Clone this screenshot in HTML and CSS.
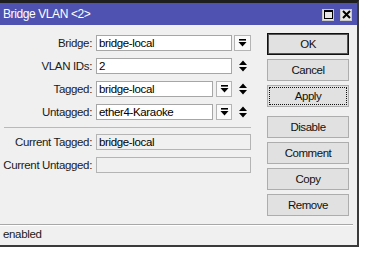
FILE: index.html
```html
<!DOCTYPE html>
<html>
<head>
<meta charset="utf-8">
<link rel="stylesheet" href="styles.css">
</head>
<body>
<div class="window">
  <div class="titlebar">
    <span class="title">Bridge VLAN &lt;2&gt;</span>
    <div class="tbtns">
      <span class="tbtn"><svg width="9" height="9" viewBox="0 0 9 9"><rect x="0.5" y="0.5" width="8" height="8" fill="none" stroke="#000" stroke-width="1"/><rect x="0" y="0" width="9" height="2" fill="#000"/></svg></span>
      <span class="tbtn"><svg width="9" height="9" viewBox="0 0 9 9"><path d="M1 1 L8 8 M8 1 L1 8" stroke="#000" stroke-width="2"/></svg></span>
    </div>
  </div>
  <div class="main">
    <div class="form">
      <div class="grid">
        <label class="lbl">Bridge:</label>
        <div class="cell">
          <div class="mainf"><div class="inp">bridge-local</div></div>
          <div class="side"><span class="dd dd-side"><svg width="9" height="8" viewBox="0 0 9 8"><rect x="1" y="0" width="7" height="1.6" fill="#000"/><path d="M0.5 3 H8.5 L4.5 7.5 Z" fill="#000"/></svg></span></div>
        </div>
        <label class="lbl">VLAN IDs:</label>
        <div class="cell">
          <div class="mainf"><div class="inp">2</div></div>
          <div class="side"><svg class="ud" width="8" height="12" viewBox="0 0 8 12"><path d="M0 5 H8 L4 0.5 Z M0 7 H8 L4 11.5 Z" fill="#000"/></svg></div>
        </div>
        <label class="lbl">Tagged:</label>
        <div class="cell">
          <div class="mainf"><div class="inp">bridge-local</div><span class="dd"><svg width="9" height="8" viewBox="0 0 9 8"><rect x="1" y="0" width="7" height="1.6" fill="#000"/><path d="M0.5 3 H8.5 L4.5 7.5 Z" fill="#000"/></svg></span></div>
          <div class="side"><svg class="ud" width="8" height="12" viewBox="0 0 8 12"><path d="M0 5 H8 L4 0.5 Z M0 7 H8 L4 11.5 Z" fill="#000"/></svg></div>
        </div>
        <label class="lbl">Untagged:</label>
        <div class="cell">
          <div class="mainf"><div class="inp">ether4-Karaoke</div><span class="dd"><svg width="9" height="8" viewBox="0 0 9 8"><rect x="1" y="0" width="7" height="1.6" fill="#000"/><path d="M0.5 3 H8.5 L4.5 7.5 Z" fill="#000"/></svg></span></div>
          <div class="side"><svg class="ud" width="8" height="12" viewBox="0 0 8 12"><path d="M0 5 H8 L4 0.5 Z M0 7 H8 L4 11.5 Z" fill="#000"/></svg></div>
        </div>
      </div>
      <div class="sep"></div>
      <div class="grid">
        <label class="lbl">Current Tagged:</label>
        <div class="cell"><div class="inp ro">bridge-local</div></div>
        <label class="lbl">Current Untagged:</label>
        <div class="cell"><div class="inp ro"></div></div>
      </div>
    </div>
    <div class="buttons">
      <div class="btn default">OK</div>
      <div class="btn">Cancel</div>
      <div class="btn focus">Apply</div>
      <div class="btn gap">Disable</div>
      <div class="btn">Comment</div>
      <div class="btn">Copy</div>
      <div class="btn">Remove</div>
    </div>
  </div>
  <div class="status"><span>enabled</span></div>
</div>
</body>
</html>
```

FILE: styles.css
```css
* { box-sizing: border-box; }
html, body { margin: 0; padding: 0; background: #ffffff; }
body {
  font-family: "Liberation Sans", Arial, sans-serif;
  font-size: 11.5px;
  letter-spacing: -0.35px;
  color: #1a1a1a;
}
.window {
  width: 359px;
  height: 247px;
  background: #f0f0f0;
  border-top: 3px solid #1e1e1e;
  border-right: 2px solid #3a3a3a;
  border-bottom: 2px solid #3a3a3a;
  display: flex;
  flex-direction: column;
}
.titlebar {
  height: 22px;
  background: #4f52b0;
  color: #fff;
  display: flex;
  align-items: center;
  justify-content: space-between;
  padding: 0 5px 0 3px;
}
.title { font-size: 12px; letter-spacing: -0.4px; padding-bottom: 1px; }
.tbtns { display: flex; gap: 6px; padding-top: 1px; }
.tbtn {
  width: 12px;
  height: 12px;
  background: #e6e6e6;
  border: 1px solid #c8c8c8;
  display: flex;
  align-items: center;
  justify-content: center;
}
.main {
  height: 199px;
  display: flex;
}
.form {
  width: 251px;
  padding-top: 10px;
}
.grid {
  display: grid;
  grid-template-columns: 92px 155px;
  column-gap: 4px;
  row-gap: 7px;
}
.lbl {
  text-align: right;
  line-height: 16px;
  white-space: nowrap;
}
.cell { display: flex; height: 16px; }
.mainf { width: 136px; display: flex; }
.side { width: 19px; display: flex; align-items: center; justify-content: center; }
.inp {
  flex: 1;
  height: 16px;
  background: #fff;
  border: 1px solid #a6a6a6;
  line-height: 14px;
  padding-left: 2px;
  white-space: nowrap;
  overflow: hidden;
  color: #000;
}
.inp.ro { background: #f0f0f0; border-color: #b4b4b4; }
.dd {
  width: 16px;
  height: 16px;
  margin-left: 3px;
  background: #fafafa;
  border: 1px solid #b4b4b4;
  display: flex;
  align-items: center;
  justify-content: center;
  flex: none;
}
.dd-side { width: 17px; margin-left: 2px; }
.side .dd-side { margin-right: auto; }
.ud { margin-left: 2px; }
.sep {
  margin: 7px 0 6px 4px;
  height: 1px;
  background: #b9b9b9;
}
.buttons {
  margin-left: 16px;
  padding-top: 8px;
  width: 82px;
  display: flex;
  flex-direction: column;
  gap: 4px;
}
.btn {
  height: 22px;
  background: #e1e1e1;
  border: 1px solid #adadad;
  display: flex;
  align-items: center;
  justify-content: center;
  font-size: 11.5px;
  letter-spacing: -0.45px;
  color: #111;
}
.btn.default { border: 1px solid #111; box-shadow: inset 0 0 0 1px #555; }
.btn.focus { outline: 1px dotted #111; outline-offset: -3px; }
.btn.gap { margin-top: 5px; }
.status {
  flex: 1;
  margin-right: 4px;
  border-top: 1px solid #a8a8a8;
  box-shadow: inset 0 1px 0 #fff;
  padding-left: 3px;
  padding-top: 2px;
  line-height: 14px;
}
```
